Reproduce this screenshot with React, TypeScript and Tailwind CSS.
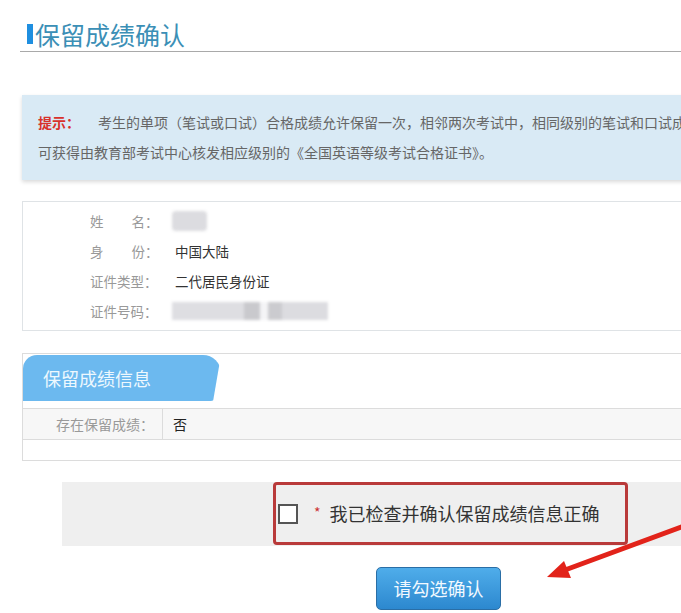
import React from "react";

const font = { fontFamily: '"Microsoft YaHei", "Noto Sans CJK SC", "Noto Sans", sans-serif' };

function InfoRow({ label, children }: { label: React.ReactNode; children?: React.ReactNode }) {
  return (
    <div className="flex h-[30px] items-center">
      <div className="w-[85px] pl-[67px] box-content text-[13.5px] text-[#999] whitespace-nowrap">{label}</div>
      <div className="text-[13.5px] text-[#333]">{children}</div>
    </div>
  );
}

export default function App() {
  return (
    <div className="relative w-[681px] h-[613px] overflow-hidden bg-white" style={font}>
      {/* Title */}
      <div className="ml-[20px] mt-[20px] h-[32px] border-b border-[#a9a9a9] flex items-start">
        <div className="flex items-center h-[28px]">
          <div className="ml-[7px] w-[6px] h-[20px] bg-[#1f8fe0]" />
          <div className="ml-[2px] text-[25px] leading-[28px] text-[#3b8fb6]">保留成绩确认</div>
        </div>
      </div>

      {/* Tip */}
      <div className="ml-[22px] mt-[43px] w-[720px] h-[85px] bg-[#d9eaf5] shadow-[0_2px_4px_rgba(0,0,0,0.15)] pt-[12px] pl-[16px] text-[14px] leading-[30px] text-[#666] whitespace-nowrap overflow-hidden">
        <div>
          <span className="text-[#d8322c] font-bold">提示：</span>
          <span className="ml-[18px]">考生的单项（笔试或口试）合格成绩允许保留一次，相邻两次考试中，相同级别的笔试和口试成绩均合格者，</span>
        </div>
        <div>可获得由教育部考试中心核发相应级别的《全国英语等级考试合格证书》。</div>
      </div>

      {/* Personal info */}
      <div className="ml-[22px] mt-[21px] w-[720px] h-[130px] border border-[#dfe3e6] pt-[4px]">
        <InfoRow label={<span>姓<span className="inline-block w-[28px]" />名：</span>}>
          <div className="ml-[-3px] w-[35px] h-[20px] rounded-[4px] bg-[#dcdce0] blur-[1.5px]" />
        </InfoRow>
        <InfoRow label={<span>身<span className="inline-block w-[28px]" />份：</span>}>中国大陆</InfoRow>
        <InfoRow label="证件类型：">二代居民身份证</InfoRow>
        <InfoRow label="证件号码：">
          <div className="ml-[-3px] flex h-[18px] w-[156px] blur-[1.5px]">
            <div className="w-[72px] bg-[#dedee2]" />
            <div className="w-[16px] bg-[#c9c9cd]" />
            <div className="w-[8px] bg-[#f4f4f6]" />
            <div className="w-[14px] bg-[#cbcbcf]" />
            <div className="w-[46px] bg-[#dcdce0]" />
          </div>
        </InfoRow>
      </div>

      {/* Retained score info */}
      <div className="ml-[22px] mt-[22px] w-[720px] h-[108px] border border-[#dcdcdc] pt-[1px]">
        <div className="w-[198px] h-[46px] bg-[#6cb9ef] rounded-tl-[14px] rounded-tr-[18px] rounded-br-[10px] [clip-path:polygon(0_0,100%_0,96%_100%,0_100%)] flex items-center pl-[20px] text-[18px] text-[#eef8fe]">
          保留成绩信息
        </div>
        <div className="mt-[7px] h-[32px] flex border-t border-b border-[#dcdcdc] bg-[#f7f7f7]">
          <div className="w-[140px] pr-[8px] border-r border-[#dcdcdc] flex items-center justify-end text-[14px] text-[#999]">存在保留成绩：</div>
          <div className="pl-[10px] flex items-center text-[14px] text-[#222]">否</div>
        </div>
      </div>

      {/* Confirm band */}
      <div className="ml-[62px] mt-[21px] w-[640px] h-[64px] bg-[#efefef]">
        <div className="ml-[211px] mt-[2px] w-[355px] h-[63px] border-[3px] border-[#b93a3a] rounded-[4px] flex items-center">
          <div className="ml-[2px] w-[20px] h-[20px] border-2 border-[#555] bg-white" />
          <span className="ml-[16px] text-[14px] text-[#c33] leading-none mt-[-4px]">*</span>
          <span className="ml-[9px] text-[18px] text-[#333]">我已检查并确认保留成绩信息正确</span>
        </div>
      </div>

      {/* Button */}
      <div className="ml-[376px] mt-[21px] w-[125px] h-[43px] rounded-[5px] border border-[#2a6ea6] bg-gradient-to-b from-[#4fadea] to-[#2c88cf] flex items-center justify-center text-[18px] text-[#f2f9ff]">
        请勾选确认
      </div>

      {/* Red arrow */}
      <svg className="absolute left-0 top-0 pointer-events-none" width="681" height="613" viewBox="0 0 681 613">
        <line x1="684" y1="526" x2="565" y2="570" stroke="#e2231a" strokeWidth="5" strokeLinecap="round" />
        <polygon points="547,577 571,578 564,561" fill="#e2231a" />
      </svg>
    </div>
  );
}
